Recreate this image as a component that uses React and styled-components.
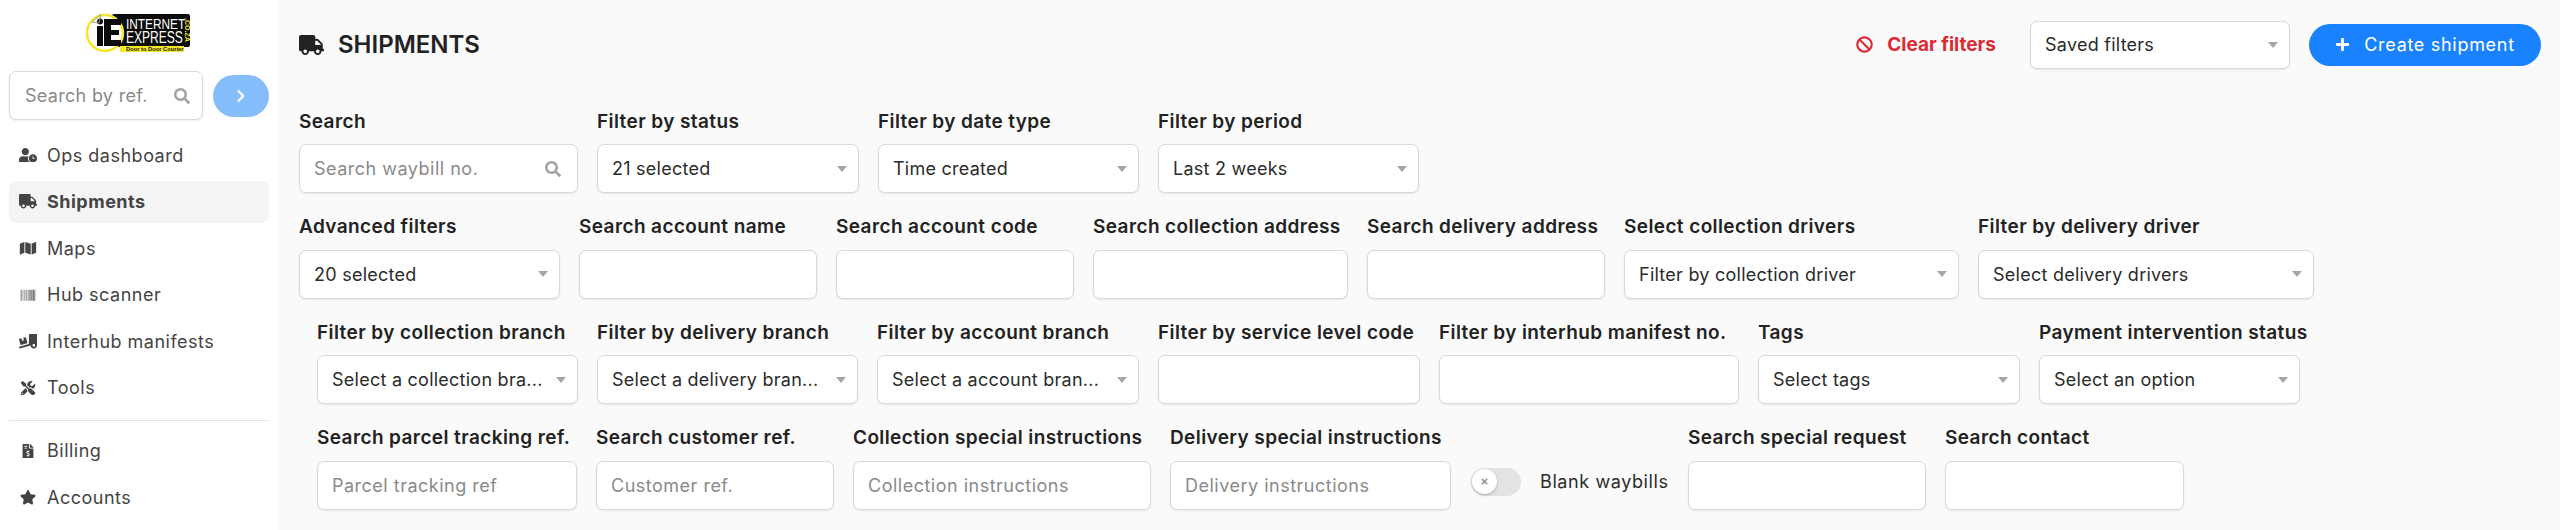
import React from 'react'
import styled, { createGlobalStyle } from 'styled-components'
import {
  FaUserClock,
  FaTruck,
  FaMap,
  FaBarcode,
  FaTruckLoading,
  FaTools,
  FaFileInvoiceDollar,
  FaStar,
  FaSearch,
  FaChevronRight,
  FaBan,
  FaPlus,
  FaTimes,
} from 'react-icons/fa'

const GlobalStyle = createGlobalStyle`
  html, body {
    margin: 0;
    padding: 0;
    background: #fafafa;
  }
  * {
    box-sizing: border-box;
  }
  body {
    font-family: Inter, "Open Sans", sans-serif;
    color: #222;
  }
`

const navTop = [
  { label: 'Ops dashboard', icon: FaUserClock },
  { label: 'Shipments', icon: FaTruck, active: true },
  { label: 'Maps', icon: FaMap },
  { label: 'Hub scanner', icon: FaBarcode },
  { label: 'Interhub manifests', icon: FaTruckLoading },
  { label: 'Tools', icon: FaTools },
]

const navBottom = [
  { label: 'Billing', icon: FaFileInvoiceDollar },
  { label: 'Accounts', icon: FaStar },
]

const rows = [
  {
    indent: 0,
    fields: [
      { label: 'Search', width: 279, placeholder: 'Search waybill no.', search: true },
      { label: 'Filter by status', width: 262, value: '21 selected' },
      { label: 'Filter by date type', width: 261, value: 'Time created' },
      { label: 'Filter by period', width: 261, value: 'Last 2 weeks' },
    ],
  },
  {
    indent: 0,
    fields: [
      { label: 'Advanced filters', width: 261, value: '20 selected' },
      { label: 'Search account name', width: 238 },
      { label: 'Search account code', width: 238 },
      { label: 'Search collection address', width: 255 },
      { label: 'Search delivery address', width: 238 },
      { label: 'Select collection drivers', width: 335, value: 'Filter by collection driver' },
      { label: 'Filter by delivery driver', width: 336, value: 'Select delivery drivers' },
    ],
  },
  {
    indent: 18,
    fields: [
      { label: 'Filter by collection branch', width: 261, value: 'Select a collection bra...' },
      { label: 'Filter by delivery branch', width: 261, value: 'Select a delivery bran...' },
      { label: 'Filter by account branch', width: 262, value: 'Select a account bran...' },
      { label: 'Filter by service level code', width: 262 },
      { label: 'Filter by interhub manifest no.', width: 300 },
      { label: 'Tags', width: 262, value: 'Select tags' },
      { label: 'Payment intervention status', width: 261, value: 'Select an option' },
    ],
  },
]

const lastRow = {
  before: [
    { label: 'Search parcel tracking ref.', width: 260, placeholder: 'Parcel tracking ref' },
    { label: 'Search customer ref.', width: 238, placeholder: 'Customer ref.' },
    { label: 'Collection special instructions', width: 298, placeholder: 'Collection instructions' },
    { label: 'Delivery special instructions', width: 281, placeholder: 'Delivery instructions' },
  ],
  after: [
    { label: 'Search special request', width: 238 },
    { label: 'Search contact', width: 239 },
  ],
}

function Logo() {
  return (
    <svg width="106" height="40" viewBox="0 0 106 40">
      <rect x="26" y="1" width="78" height="33" fill="#0b0b0b" rx="2" />
      <rect x="34" y="33" width="64" height="6" fill="#f6ea28" />
      <circle cx="19" cy="20" r="18" fill="#fff" stroke="#f6e62a" strokeWidth="2.5" />
      <rect x="11" y="13" width="6" height="20" fill="#0b0b0b" />
      <circle cx="14" cy="8.5" r="3" fill="#0b0b0b" />
      <path d="M18 6h17v6h-10v5h8v5h-8v5h10v6H18z" fill="#0b0b0b" />
      <path d="M6 9l9-8-2 9z" fill="none" stroke="#999" strokeWidth="0.9" />
      <text fontSize="15" fill="#fff" fontFamily="Liberation Sans" transform="translate(40 16) scale(0.79 1)">INTERNET</text>
      <text fontSize="16.5" fill="#fff" fontFamily="Liberation Sans" transform="translate(40 29.5) scale(0.73 1)">EXPRESS</text>
      <text fontSize="7" fontWeight="700" fill="#f6e62a" fontFamily="Liberation Sans" transform="translate(98.5 5) rotate(90)">.CO.ZA</text>
      <text fontSize="6" fontWeight="700" fill="#111" fontFamily="Liberation Sans" transform="translate(40 38) scale(0.96 1)">Door to Door Courier</text>
    </svg>
  )
}

function Field({ label, width, value, placeholder, search }) {
  return (
    <FieldWrap $width={width}>
      <FieldLabel>{label}</FieldLabel>
      <Box $search={search}>
        {value && <BoxText>{value}</BoxText>}
        {placeholder && <BoxHint>{placeholder}</BoxHint>}
        {value && <CaretMark />}
        {search && <SearchGlyph />}
      </Box>
    </FieldWrap>
  )
}

function NavItem({ label, icon: Icon, active }) {
  return (
    <NavRow $active={active}>
      <NavIcon><Icon /></NavIcon>
      <NavLabel $active={active}>{label}</NavLabel>
    </NavRow>
  )
}

export default function App() {
  return (
    <Page>
      <GlobalStyle />
      <Sidebar>
        <LogoWrap><Logo /></LogoWrap>
        <SideSearch>
          <SideInput>
            <SideHint>Search by ref.</SideHint>
            <SearchGlyph />
          </SideInput>
          <GoButton><FaChevronRight /></GoButton>
        </SideSearch>
        <NavList>
          {navTop.map((item) => <NavItem key={item.label} {...item} />)}
        </NavList>
        <Divider />
        <NavList>
          {navBottom.map((item) => <NavItem key={item.label} {...item} />)}
        </NavList>
      </Sidebar>
      <Main>
        <Header>
          <Title><FaTruck /><span>SHIPMENTS</span></Title>
          <Actions>
            <ClearButton><FaBan />Clear filters</ClearButton>
            <SavedSelect>
              <BoxText>Saved filters</BoxText>
              <CaretMark />
            </SavedSelect>
            <CreateButton><FaPlus />Create shipment</CreateButton>
          </Actions>
        </Header>
        {rows.map((row) => (
          <Row key={row.fields[0].label} $indent={row.indent}>
            {row.fields.map((field) => <Field key={field.label} {...field} />)}
          </Row>
        ))}
        <Row $indent={18}>
          {lastRow.before.map((field) => <Field key={field.label} {...field} />)}
          <ToggleWrap>
            <Toggle><Knob><FaTimes /></Knob></Toggle>
            <ToggleLabel>Blank waybills</ToggleLabel>
          </ToggleWrap>
          {lastRow.after.map((field) => <Field key={field.label} {...field} />)}
        </Row>
      </Main>
    </Page>
  )
}

const Page = styled.div`
  display: flex;
  width: 2560px;
  height: 530px;
  overflow: hidden;
  background: #fafafa;
`

const Sidebar = styled.aside`
  flex: 0 0 279px;
  background: #fff;
  padding: 13px 10px 0 9px;
`

const LogoWrap = styled.div`
  display: flex;
  justify-content: center;
  height: 58px;
  svg {
    display: block;
  }
`

const SideSearch = styled.div`
  display: flex;
  align-items: center;
  gap: 10px;
  height: 49px;
`

const SideInput = styled.div`
  flex: 0 0 194px;
  height: 49px;
  display: flex;
  align-items: center;
  justify-content: space-between;
  padding: 0 12px 0 15px;
  background: #fff;
  border: 1px solid #d9d9d9;
  border-radius: 7px;
  box-shadow: 0 1px 2px rgba(0, 0, 0, 0.08);
`

const SideHint = styled.span`
  font-size: 18px;
  color: #8a8a8a;
  letter-spacing: 0.3px;
`

const GoButton = styled.div`
  flex: 0 0 56px;
  height: 42px;
  border-radius: 21px;
  background: #85bdfd;
  color: #fff;
  display: flex;
  align-items: center;
  justify-content: center;
  font-size: 14px;
`

const NavList = styled.nav`
  display: flex;
  flex-direction: column;
  gap: 4.6px;
  &:first-of-type {
    margin-top: 14px;
  }
`

const NavRow = styled.div`
  height: 42px;
  display: flex;
  align-items: center;
  padding-left: 10px;
  border-radius: 8px;
  background: ${(p) => (p.$active ? '#f4f4f4' : 'transparent')};
`

const NavIcon = styled.span`
  flex: 0 0 18px;
  margin-right: 10px;
  display: flex;
  align-items: center;
  justify-content: center;
  color: #444;
  svg {
    width: 18px;
    height: 14.5px;
  }
`

const NavLabel = styled.span`
  font-size: 18px;
  font-weight: ${(p) => (p.$active ? 700 : 400)};
  color: #444;
  letter-spacing: 0.5px;
`

const Divider = styled.div`
  height: 1px;
  background: #e4e4e4;
  margin: 11px 0 9px;
`

const Main = styled.main`
  flex: 1;
  padding: 20px 19px 0 20px;
`

const Header = styled.div`
  display: flex;
  align-items: center;
  justify-content: space-between;
  height: 49px;
  margin-bottom: 38px;
`

const Title = styled.h1`
  margin: 0;
  display: flex;
  align-items: center;
  gap: 14px;
  font-size: 24px;
  font-weight: 600;
  color: #222;
  svg {
    width: 25px;
    height: 20px;
  }
`

const Actions = styled.div`
  display: flex;
  align-items: center;
`

const ClearButton = styled.div`
  display: flex;
  align-items: center;
  gap: 14px;
  margin-right: 34px;
  font-size: 19px;
  font-weight: 700;
  color: #dc2a32;
  svg {
    font-size: 17px;
  }
`

const SavedSelect = styled.div`
  width: 260px;
  height: 48px;
  display: flex;
  align-items: center;
  justify-content: space-between;
  padding: 0 11px 0 14px;
  background: #fff;
  border: 1px solid #d9d9d9;
  border-radius: 7px;
  box-shadow: 0 1px 2px rgba(0, 0, 0, 0.08);
  margin-right: 19px;
`

const CreateButton = styled.div`
  width: 232px;
  height: 42px;
  border-radius: 21px;
  background: #1a82ff;
  color: #fff;
  display: flex;
  align-items: center;
  justify-content: center;
  gap: 14px;
  font-size: 18px;
  letter-spacing: 0.7px;
  svg {
    font-size: 15px;
  }
`

const Row = styled.div`
  display: flex;
  gap: 19px;
  padding-left: ${(p) => p.$indent}px;
  margin-bottom: 19.5px;
`

const FieldWrap = styled.div`
  flex: 0 0 ${(p) => p.$width}px;
  width: ${(p) => p.$width}px;
`

const FieldLabel = styled.div`
  height: 26px;
  line-height: 26px;
  margin-top: 1.5px;
  margin-bottom: 9.5px;
  font-size: 19px;
  font-weight: 600;
  letter-spacing: 0.4px;
  color: #222;
  white-space: nowrap;
`

const Box = styled.div`
  height: 49px;
  display: flex;
  align-items: center;
  justify-content: space-between;
  padding: 0 ${(p) => (p.$search ? 16 : 11)}px 0 14px;
  background: #fff;
  border: 1px solid #d9d9d9;
  border-radius: 7px;
  box-shadow: 0 1px 2px rgba(0, 0, 0, 0.08);
`

const BoxText = styled.span`
  font-size: 18px;
  letter-spacing: 0.25px;
  color: #2b2b2b;
  white-space: nowrap;
`

const BoxHint = styled.span`
  font-size: 18px;
  letter-spacing: 0.5px;
  color: #8a8a8a;
  white-space: nowrap;
`

const CaretMark = styled.span`
  width: 0;
  height: 0;
  border-left: 5.5px solid transparent;
  border-right: 5.5px solid transparent;
  border-top: 6px solid #a6a6a6;
`

const SearchGlyph = styled(FaSearch)`
  font-size: 16px;
  color: #a3a3a3;
`

const ToggleWrap = styled.div`
  flex: 0 0 199px;
  align-self: flex-start;
  height: 28px;
  display: flex;
  align-items: center;
  gap: 19px;
  margin-top: 44px;
  padding-left: 1px;
`

const Toggle = styled.div`
  flex: 0 0 50px;
  height: 28px;
  border-radius: 14px;
  background: #e3e3e3;
  display: flex;
  align-items: center;
  padding-left: 1px;
`

const Knob = styled.span`
  width: 25px;
  height: 25px;
  border-radius: 50%;
  background: #fff;
  color: #999;
  box-shadow: 0 1px 3px rgba(0, 0, 0, 0.25);
  display: flex;
  align-items: center;
  justify-content: center;
  font-size: 9px;
`

const ToggleLabel = styled.span`
  font-size: 18px;
  letter-spacing: 0.6px;
  color: #2b2b2b;
  white-space: nowrap;
`
